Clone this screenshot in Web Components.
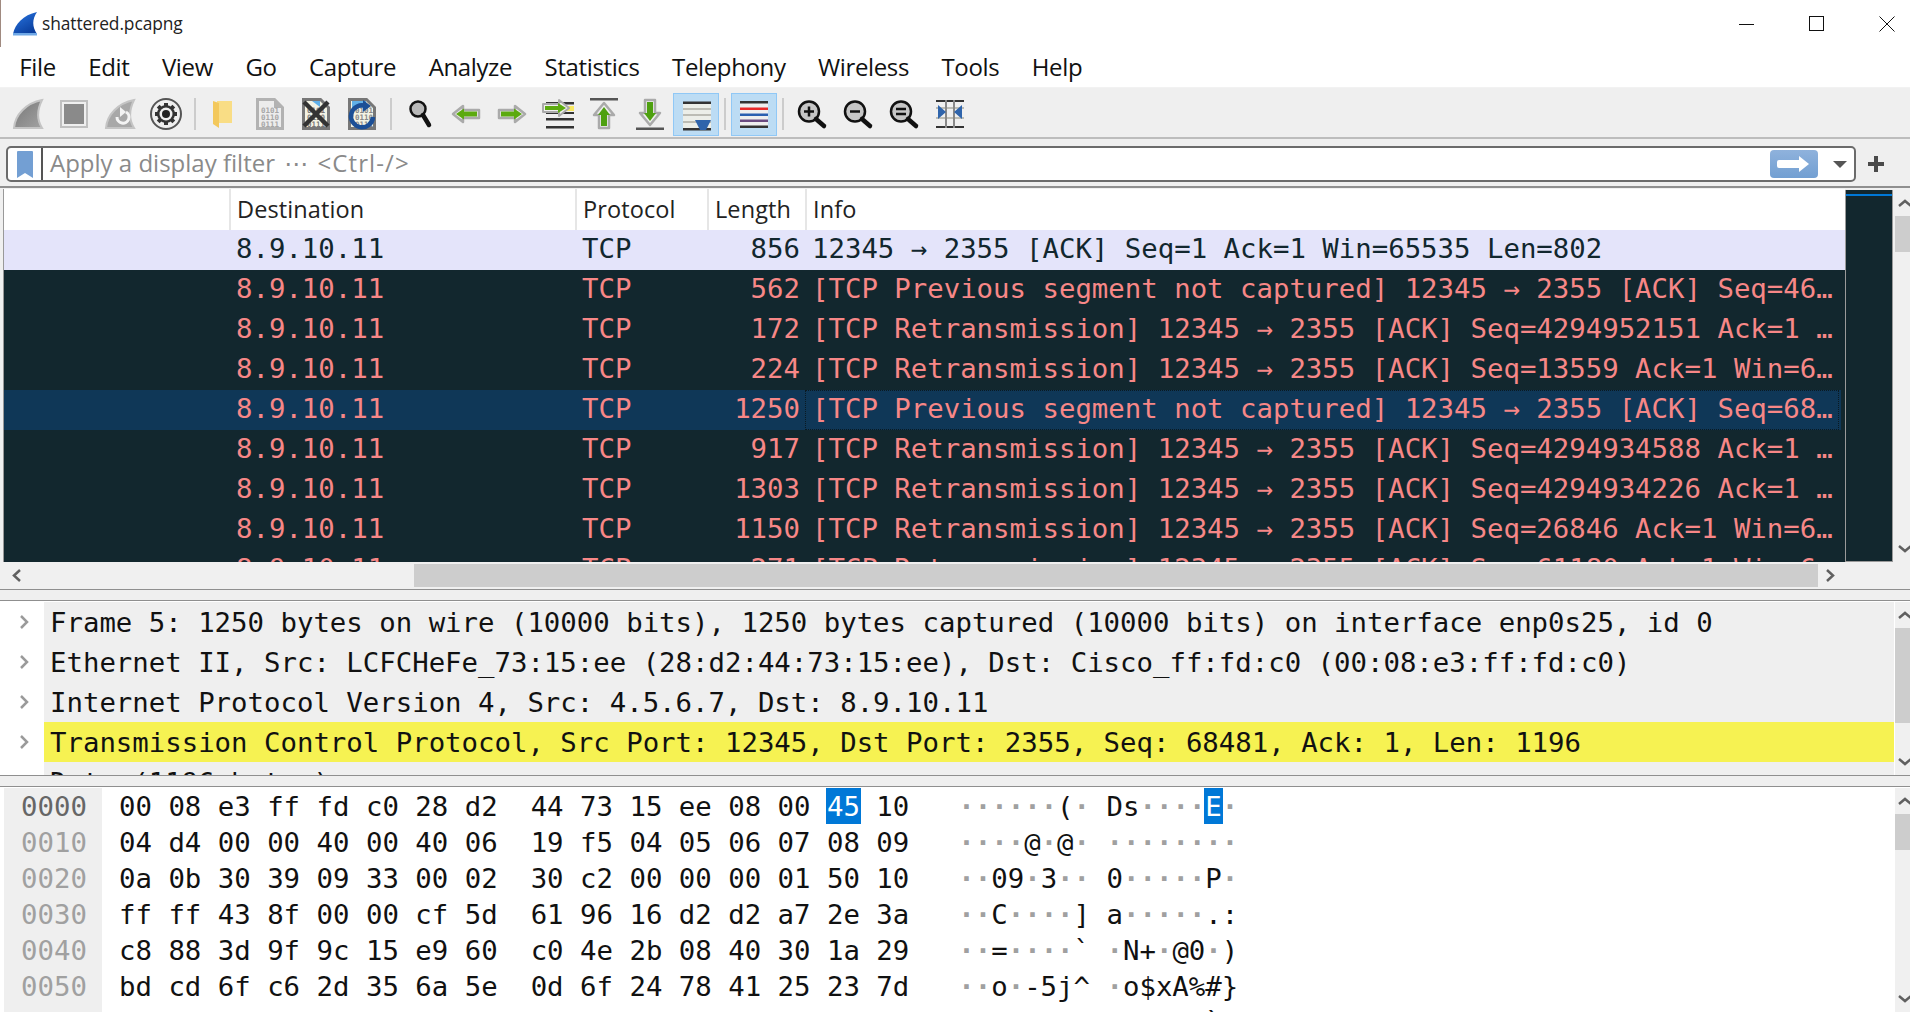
<!DOCTYPE html>
<html><head><meta charset="utf-8">
<style>
html,body{margin:0;padding:0;height:100%;overflow:hidden;background:#fff}
body{width:1910px;height:1012px}
</style></head><body>
<ws-app></ws-app>
<script>
const UI='"Open Sans","Noto Sans",sans-serif';
const MONO='"DejaVu Sans Mono",monospace';
class WsTitle extends HTMLElement{constructor(){super();this.attachShadow({mode:'open'}).innerHTML=`<style>
:host{display:flex;align-items:center;height:47px;background:#fff;font:17.400px ${UI};color:#222;padding-left:12px;border-left:1px solid #a08a80;box-sizing:border-box}
.t{margin-left:4px;flex:1;letter-spacing:-.1px;padding-bottom:2px}
.b{width:70px;height:47px;display:flex;align-items:center;justify-content:center;box-sizing:border-box}
.x{width:58px;padding-left:12px}
svg{display:block}
</style>
<svg width="25" height="24" viewBox="0 0 25 24"><defs><linearGradient id="s" x1="0" y1="0" x2=".6" y2="1"><stop offset="0" stop-color="#2a78e4"/><stop offset="1" stop-color="#0b3f9e"/></linearGradient></defs><path d="M0 22C2 12 10 3 24 0C19 7 19 15 24 22Z" fill="url(#s)"/><rect y="21" width="24" height="2.500" fill="#6fa8e6"/></svg>
<span class="t">shattered.pcapng</span>
<span class="b"><svg width="16" height="16"><path d="M0 8.500H15" stroke="#111" fill="none"/></svg></span>
<span class="b"><svg width="16" height="16"><rect x=".5" y=".5" width="14" height="14" stroke="#111" fill="none"/></svg></span>
<span class="b x"><svg width="16" height="16"><path d="M.5 .5L15.500 15.500M15.500 .5L.5 15.500" stroke="#111" fill="none"/></svg></span>`}}
customElements.define('ws-title',WsTitle);

class WsMenu extends HTMLElement{constructor(){super();const items=['File','Edit','View','Go','Capture','Analyze','Statistics','Telephony','Wireless','Tools','Help'];
this.attachShadow({mode:'open'}).innerHTML=`<style>
:host{display:flex;height:40px;align-items:center;background:#fff;font:24px ${UI};color:#111;padding-left:3px;border-bottom:1px solid #f2f2f2;box-sizing:content-box}
span{padding:0 16.250px 2px;letter-spacing:-.37px}
</style>`+items.map(i=>`<span>${i}</span>`).join('')}}
customElements.define('ws-menu',WsMenu);

const bin=(c,x)=>`<g font-family="DejaVu Sans Mono" font-size="7.500" font-weight="bold" fill="${c}"><text x="${x}" y="15">0101</text><text x="${x}" y="22">0110</text><text x="${x}" y="29">0111</text></g>`;
const finD='M2 30C3 17 14 5 30 2C25 12 25 22 30 30Z';
const mag=inner=>`<circle cx="13" cy="13.500" r="10" fill="#c6c6c6" stroke="#111" stroke-width="2.500"/>${inner}<path d="M20 21L28 28" stroke="#111" stroke-width="4.500" stroke-linecap="round"/>`;
const I={
fin:`<defs><linearGradient id="g" x1="0" y1="0" x2="1" y2="1"><stop offset="0" stop-color="#777"/><stop offset="1" stop-color="#a2a2a2"/></linearGradient></defs><path d="${finD}" fill="url(#g)" stroke="#c4c4c4" stroke-width="2"/>`,
stop:`<rect x="3" y="3" width="26" height="26" fill="#efefef" stroke="#c0c0c0" stroke-width="2"/><rect x="6" y="6" width="20" height="20" fill="#8a8a8a"/>`,
rest:`<path d="${finD}" fill="#a8a8a8" stroke="#c4c4c4" stroke-width="2"/><path d="M13 19a6 6 0 1 0 9-5" fill="none" stroke="#f4f4f4" stroke-width="3"/><path d="M17 9l6 5-6 5z" fill="#f4f4f4" transform="translate(-1 0)"/>`,
gear:`<circle cx="16" cy="16" r="15" fill="#efefef" stroke="#555" stroke-width="2"/><g stroke="#333" stroke-width="4"><path d="M16 5v22M5 16h22M8.200 8.200l15.600 15.600M23.800 8.200L8.200 23.800"/></g><circle cx="16" cy="16" r="9" fill="#333"/><circle cx="16" cy="16" r="6.500" fill="#efefef"/><circle cx="16" cy="16" r="4" fill="#222"/>`,
folder:`<path d="M9 3h15v22H11z" fill="#f9dd85"/><path d="M5 3l6 2v25l-6-4z" fill="#f3c85c"/>`,
file:`<path d="M3.500 1.500h17l8 8v21h-25z" fill="#ececec" stroke="#b2b2b2" stroke-width="3"/><path d="M20 1l9 9h-9z" fill="#b2b2b2"/>${bin('#a6a6a6',7)}`,
close:`<path d="M3.500 1.500h17l8 8v21h-25z" fill="#f3f3e4" stroke="#777" stroke-width="3"/><path d="M12 3h8v6z" fill="#60b0e8"/>${bin('#777',7)}<path d="M4 4L28 28M28 4L4 28" stroke="#333" stroke-width="4.500"/>`,
reload:`<path d="M3.500 1.500h17l8 8v21h-25z" fill="#f3f3e4" stroke="#777" stroke-width="3"/><path d="M6 3h14v7H6z" fill="#60b0e8"/>${bin('#888',9)}<path d="M20 8A11 11 0 1 0 27 19" fill="none" stroke="#1c4f96" stroke-width="4.500"/><path d="M17 2l8 6-8 6z" fill="#1c4f96"/>`,
find:`<circle cx="14" cy="11" r="7.500" fill="#b8b8b8" stroke="#111" stroke-width="2.500"/><path d="M19 17L25 27" stroke="#111" stroke-width="4.500" stroke-linecap="round"/>`,
back:`<path d="M3 16L13 8v4h16v8H13v4z" fill="#efefef" stroke="#aaa" stroke-width="2.500" stroke-linejoin="round"/><path d="M6 16l8-5.500v3h13v5H14v3z" fill="#5caa10"/>`,
fwd:`<path d="M29 16L19 8v4H3v8h16v4z" fill="#efefef" stroke="#aaa" stroke-width="2.500" stroke-linejoin="round"/><path d="M26 16l-8-5.500v3H5v5h13v3z" fill="#5caa10"/>`,
go:`<rect x="22" y="8" width="10" height="5" fill="#f8e860"/><g fill="#333"><rect x="4" y="4" width="28" height="2.500"/><rect x="4" y="20" width="28" height="2.500"/><rect x="4" y="28" width="28" height="2.500"/><rect x="4" y="14" width="28" height="2"/></g><path d="M27 10L17 2v4H1v8h16v4z" fill="#efefef" stroke="#aaa" stroke-width="2" stroke-linejoin="round"/><path d="M24 10l-8-5v3H3v4h13v3z" fill="#5caa10"/>`,
first:`<rect x="2" y="0" width="28" height="2.500" fill="#555"/><path d="M16 5l10 12h-5v13h-10V17H6z" fill="#efefef" stroke="#aaa" stroke-width="2.500" stroke-linejoin="round"/><path d="M16 9l6 8h-3v11h-6V17h-3z" fill="#4ea010"/>`,
last:`<rect x="2" y="29.500" width="28" height="2.500" fill="#555"/><path d="M16 27l10-12h-5V2h-10v13H6z" fill="#efefef" stroke="#aaa" stroke-width="2.500" stroke-linejoin="round"/><path d="M16 23l6-8h-3V4h-6v11h-3z" fill="#4ea010"/>`,
auto:`<rect x="3" y="4" width="28" height="27" fill="#eceee8"/><rect x="3" y="3.500" width="28" height="2.500" fill="#333"/><rect x="3" y="10" width="28" height="2" fill="#bcbcb4"/><rect x="3" y="16" width="28" height="2" fill="#bcbcb4"/><rect x="3" y="23" width="28" height="2" fill="#bcbcb4"/><rect x="3" y="30" width="28" height="2.500" fill="#333"/><path d="M15 22h16l-5 10h-6z" fill="#2f64ab"/>`,
color:`<rect x="2" y="3" width="28" height="27" fill="#eee"/><rect x="2" y="3" width="28" height="2.500" fill="#333"/><rect x="2" y="9.500" width="28" height="2.500" fill="#e82a2a"/><rect x="2" y="15.500" width="28" height="2.500" fill="#2a5fb0"/><rect x="2" y="21.500" width="28" height="2.500" fill="#6a4a80"/><rect x="2" y="27.500" width="28" height="2.500" fill="#333"/>`,
zin:mag(`<path d="M8 13.500h10M13 8.500v10" stroke="#111" stroke-width="2.500"/>`),
zout:mag(`<path d="M8 13.500h10" stroke="#111" stroke-width="2.500"/>`),
z1:mag(`<path d="M8 11h10M8 16h10" stroke="#111" stroke-width="2.500"/>`),
resize:`<g fill="#bcbcb4"><rect x="2" y="9" width="28" height="2"/><rect x="2" y="19" width="28" height="2"/></g><g fill="#333"><rect x="2" y="2" width="28" height="2"/><rect x="2" y="28" width="28" height="2"/></g><path d="M12 2v28M20 2v28" stroke="#888" stroke-width="2"/><path d="M4 7l8 7-8 7zM28 7l-8 7 8 7z" fill="#2f64ab"/>`
};
class WsIcon extends HTMLElement{constructor(){super();this.attachShadow({mode:'open'})}
connectedCallback(){const n=this.getAttribute('name');
this.shadowRoot.innerHTML=`<style>
:host{display:flex;width:46px;height:43px;align-items:center;justify-content:center;box-sizing:border-box}
:host([on]){background:#bcdcf4;border:1px solid #90c8f6}
svg{display:block;overflow:visible}
</style><svg width="32" height="32" viewBox="0 0 32 32">${I[n]}</svg>`}}
customElements.define('ws-icon',WsIcon);

class WsToolbar extends HTMLElement{constructor(){super();
const sep='<i></i>';const t=n=>`<ws-icon name="${n}"></ws-icon>`;
this.attachShadow({mode:'open'}).innerHTML=`<style>
:host{display:flex;align-items:center;height:46px;padding-top:3px;background:#efefef;border-bottom:2px solid #bdbdbd;padding-left:5px;box-sizing:content-box}
i{display:block;width:2px;height:32px;background:#ccc;margin:0 5px}
</style>`+['fin','stop','rest','gear'].map(t).join('')+sep+['folder','file','close','reload'].map(t).join('')+sep+['find','back','fwd','go','first','last'].map(t).join('')+`<ws-icon name="auto" on></ws-icon>`+sep+`<ws-icon name="color" on></ws-icon>`+sep+['zin','zout','z1','resize'].map(t).join('')}}
customElements.define('ws-toolbar',WsToolbar);

class WsFilter extends HTMLElement{constructor(){super();this.attachShadow({mode:'open'}).innerHTML=`<style>
:host{display:flex;align-items:flex-start;height:47px;background:#efefef;box-sizing:border-box;padding:7px 0 0 6px}
.box{flex:none;width:1850px;height:36px;box-sizing:border-box;border:2px solid #6b6b6b;border-radius:5px;background:#fff;display:flex;align-items:center;font:24px ${UI};color:#8a8a8a}
.bm{width:33px;display:flex;justify-content:center;box-sizing:border-box}
.sep{width:2px;height:32px;background:#555}
.tx{flex:1;padding:0 0 2px 7px;white-space:pre;line-height:30px}
.el{font-family:"DejaVu Sans",sans-serif;line-height:0;margin:0 3px}
.ct{letter-spacing:1.100px}
.go{width:48px;height:28px;border-radius:4px;background:linear-gradient(#8fb2dc,#729fd2);display:flex;align-items:center;justify-content:center;margin-right:15px}
.dd{width:0;height:0;border-left:7px solid transparent;border-right:7px solid transparent;border-top:7px solid #555;margin-right:7px}
.plus{flex:1;display:flex;justify-content:center;padding:10px 14px 0 0}
svg{display:block}
</style><div class="box"><div class="bm"><svg width="16" height="28"><path d="M0 2a1 1 0 0 1 1-1h14a1 1 0 0 1 1 1v26l-8-5-8 5z" fill="#739fd3"/></svg></div><div class="sep"></div><div class="tx">Apply a display filter <span class="el">⋯</span> <span class="ct">&lt;Ctrl-/&gt;</span></div>
<div class="go"><svg width="34" height="18"><path d="M2 5h20V1l10 8-10 8v-4H2a2 2 0 0 1-2-2V7a2 2 0 0 1 2-2z" fill="#fff"/></svg></div><div class="dd"></div></div>
<div class="plus"><svg width="16" height="16"><path d="M8 0v16M0 8h16" stroke="#4a4a4a" stroke-width="4"/></svg></div>`}}
customElements.define('ws-filter',WsFilter);

class WsRow extends HTMLElement{constructor(){super();this.attachShadow({mode:'open'})}
connectedCallback(){const g=a=>this.getAttribute(a)||'';
this.shadowRoot.innerHTML=`<style>
:host{display:grid;grid-template-columns:225px 346px 132px 98px 1fr;height:40px;align-items:stretch;font:27.350px ${MONO};background:#12272e;color:#f78787;white-space:nowrap;overflow:hidden;flex:none;box-sizing:border-box}
:host([kind=light]){background:#e4e4fa;color:#12272e}
:host([kind=sel]){background:#0f3757;border-right:4px solid #12272e}
span{display:block;overflow:hidden;line-height:38px;height:40px}
.d,.p{padding-left:7px}.l{text-align:right;padding-right:5px}
.i{padding-left:7px;margin-right:6px}
:host([kind=sel]) .i{margin-right:2px;outline:1px dotted #0a1a22;outline-offset:-1px}
</style><span></span><span class="d">8.9.10.11</span><span class="p">TCP</span><span class="l">${g('len')}</span><span class="i">${g('info')}</span>`}}
customElements.define('ws-row',WsRow);

class WsVscroll extends HTMLElement{constructor(){super();this.attachShadow({mode:'open'})}
connectedCallback(){const h=this.getAttribute('h')||36;
this.shadowRoot.innerHTML=`<style>
:host{display:flex;flex-direction:column;width:15px;background:#f0f0f0;flex:none;overflow:hidden}
.a{height:26px;display:flex;align-items:center;padding-left:3px;flex:none}
.tr{flex:1;min-height:0}
.th{height:${h}px;background:#cdcdcd}
svg{display:block}
</style><div class="a"><svg width="12" height="10"><path d="M1 8l6-5 6 5" fill="none" stroke="#606060" stroke-width="2.500"/></svg></div><div class="tr"><div class="th"></div></div><div class="a"><svg width="12" height="10"><path d="M1 2l6 5 6-5" fill="none" stroke="#606060" stroke-width="2.500"/></svg></div>`}}
customElements.define('ws-vscroll',WsVscroll);

class WsList extends HTMLElement{constructor(){super();
const rows=[['light','856','12345 → 2355 [ACK] Seq=1 Ack=1 Win=65535 Len=802'],
['','562','[TCP Previous segment not captured] 12345 → 2355 [ACK] Seq=46…'],
['','172','[TCP Retransmission] 12345 → 2355 [ACK] Seq=4294952151 Ack=1 …'],
['','224','[TCP Retransmission] 12345 → 2355 [ACK] Seq=13559 Ack=1 Win=6…'],
['sel','1250','[TCP Previous segment not captured] 12345 → 2355 [ACK] Seq=68…'],
['','917','[TCP Retransmission] 12345 → 2355 [ACK] Seq=4294934588 Ack=1 …'],
['','1303','[TCP Retransmission] 12345 → 2355 [ACK] Seq=4294934226 Ack=1 …'],
['','1150','[TCP Retransmission] 12345 → 2355 [ACK] Seq=26846 Ack=1 Win=6…'],
['','271','[TCP Retransmission] 12345 → 2355 [ACK] Seq=61180 Ack=1 Win=6…']];
this.attachShadow({mode:'open'}).innerHTML=`<style>
:host{display:flex;flex-direction:column;height:404px;background:#f0f0f0;border-top:2px solid #8f8f8f;box-sizing:border-box;padding-top:1px;border-bottom:1px solid #8f8f8f}
.main{display:flex;height:373px;flex:none}
.left{width:3px;flex:none;background:#f0f0f0;border-right:1px solid #999}
.tb{width:1841px;display:flex;flex-direction:column;overflow:hidden;flex:none}
.hd{display:grid;grid-template-columns:225px 346px 132px 98px 1fr;height:41px;flex:none;background:#fff;font:23.500px ${UI};color:#222;align-items:stretch}
.hd span{border-left:2px solid #e6e6e6;padding:0 0 2px 6px;display:flex;align-items:center;letter-spacing:.1px}
.hd span:first-child{border:none}
.map{width:48px;box-sizing:border-box;flex:none;background:#12272e;border:1px solid #9a9a9a;border-width:0 1px 1px 1px;position:relative;margin:1px 2px 0 0}
.map b{position:absolute;left:0;right:0;top:4px;height:2px;background:#0078d7}
ws-vscroll{margin-top:1px}
.hs{height:27px;display:flex;align-items:center;flex:none;padding-left:3px}
.ar{width:39px;display:flex;padding-left:8px;box-sizing:border-box;flex:none}
.th{margin-left:372px;width:1404px;height:23px;background:#cdcdcd;flex:none}
.ar2{margin-left:auto;padding-right:74px;display:flex}
svg{display:block}
</style><div class="main"><div class="left"></div><div class="tb"><div class="hd"><span></span><span>Destination</span><span>Protocol</span><span>Length</span><span>Info</span></div>${rows.map(r=>`<ws-row kind="${r[0]}" len="${r[1]}" info="${r[2]}"></ws-row>`).join('')}</div><div class="map"><b></b></div><ws-vscroll h="36"></ws-vscroll></div>
<div class="hs"><div class="ar"><svg width="11" height="13"><path d="M9 1L3 6.500l6 5.500" fill="none" stroke="#606060" stroke-width="2.500"/></svg></div><div class="th"></div><div class="ar2"><svg width="11" height="13"><path d="M2 1l6 5.500L2 12" fill="none" stroke="#606060" stroke-width="2.500"/></svg></div></div>`}}
customElements.define('ws-list',WsList);

class WsDetail extends HTMLElement{constructor(){super();
const rows=['Frame 5: 1250 bytes on wire (10000 bits), 1250 bytes captured (10000 bits) on interface enp0s25, id 0',
'Ethernet II, Src: LCFCHeFe_73:15:ee (28:d2:44:73:15:ee), Dst: Cisco_ff:fd:c0 (00:08:e3:ff:fd:c0)',
'Internet Protocol Version 4, Src: 4.5.6.7, Dst: 8.9.10.11',
'Transmission Control Protocol, Src Port: 12345, Dst Port: 2355, Seq: 68481, Ack: 1, Len: 1196',
'Data (1196 bytes)'];
this.attachShadow({mode:'open'}).innerHTML=`<style>
:host{display:flex;height:173px;margin-top:10px;border-top:1px solid #8f8f8f;border-bottom:1px solid #8f8f8f;padding-top:1px;background:#fff;box-sizing:content-box;overflow:hidden}
.g{width:44px;flex:none;overflow:hidden;padding-left:3px;box-sizing:border-box}
.g div{height:40px;display:flex;align-items:center;padding-left:16px}
.m{flex:none;width:1850px;background:#efefef;overflow:hidden;font:27.350px ${MONO};color:#111;white-space:pre}
.r{height:40px;line-height:42px;padding-left:6px;overflow:hidden}
.y{background:#f6f252}
svg{display:block}
ws-vscroll{margin-left:1px}
</style><div class="g">${rows.map(()=>`<div><svg width="11" height="16"><path d="M2 2l6 6-6 6" fill="none" stroke="#9a9a9a" stroke-width="2.500"/></svg></div>`).join('')}</div>
<div class="m">${rows.map((r,i)=>`<div class="r ${i==3?'y':''}">${r}</div>`).join('')}</div><ws-vscroll h="95"></ws-vscroll>`}}
customElements.define('ws-detail',WsDetail);

class WsHex extends HTMLElement{constructor(){super();
const rows=[['0000','00 08 e3 ff fd c0 28 d2','44 73 15 ee 08 00 45 10','······(·','Ds····E·'],
['0010','04 d4 00 00 40 00 40 06','19 f5 04 05 06 07 08 09','····@·@·','········'],
['0020','0a 0b 30 39 09 33 00 02','30 c2 00 00 00 01 50 10','··09·3··','0·····P·'],
['0030','ff ff 43 8f 00 00 cf 5d','61 96 16 d2 d2 a7 2e 3a','··C····]','a·····.:'],
['0040','c8 88 3d 9f 9c 15 e9 60','c0 4e 2b 08 40 30 1a 29','··=····`','·N+·@0·)'],
['0050','bd cd 6f c6 2d 35 6a 5e','0d 6f 24 78 41 25 23 7d','··o·-5j^','·o$xA%#}'],
['0060','8a 9c 0e 5b 0a 9a 9c 8c','8e 11 34 db 2f f9 60 25','···[····','··4·/·`%']];
const dots=s=>s.replace(/·/g,'<u>·</u>');
const fix=(h,i)=>i==0?h.replace('45 10','<em>45</em> 10'):h;
const fixa=(a,i)=>i==0?a.replace('E','<em>E</em>'):a;
this.attachShadow({mode:'open'}).innerHTML=`<style>
:host{display:flex;flex:1;min-height:0;margin-top:10px;border-top:1px solid #8f8f8f;background:#fff;padding-top:1px;overflow:hidden;box-sizing:border-box}
.off{width:98px;flex:none;background:#efefef;margin-left:4px;box-sizing:border-box;padding-left:17px;color:#a0a0a0}
.off div:first-child{color:#666}
.m{flex:1;padding-left:17px}
.off,.m{font:27.350px ${MONO};white-space:pre}
.l{height:36px;line-height:38px}
.m .l{display:flex;color:#111}
.a{margin-left:33px}.b{margin-left:49px}.c{margin-left:16.500px}
u{text-decoration:none;color:#a0a0a0;font-weight:bold}
em{font-style:normal;background:#0078d7;color:#fff;display:inline-block;height:36px;padding:0 1px;margin:0 -1px;line-height:38px;vertical-align:top}
</style><div class="off">${rows.map(r=>`<div class="l">${r[0]}</div>`).join('')}</div>
<div class="m">${rows.map((r,i)=>`<div class="l"><span>${r[1]}</span><span class="a">${fix(r[2],i)}</span><span class="b">${dots(r[3])}</span><span class="c">${dots(fixa(r[4],i))}</span></div>`).join('')}</div>
<ws-vscroll h="36"></ws-vscroll>`}}
customElements.define('ws-hex',WsHex);

class WsApp extends HTMLElement{constructor(){super();this.attachShadow({mode:'open'}).innerHTML=`<style>
:host{display:flex;flex-direction:column;width:1910px;height:1012px;overflow:hidden;background:#efefef}
</style><ws-title></ws-title><ws-menu></ws-menu><ws-toolbar></ws-toolbar><ws-filter></ws-filter><ws-list></ws-list><ws-detail></ws-detail><ws-hex></ws-hex>`}}
customElements.define('ws-app',WsApp);
</script></body></html>
